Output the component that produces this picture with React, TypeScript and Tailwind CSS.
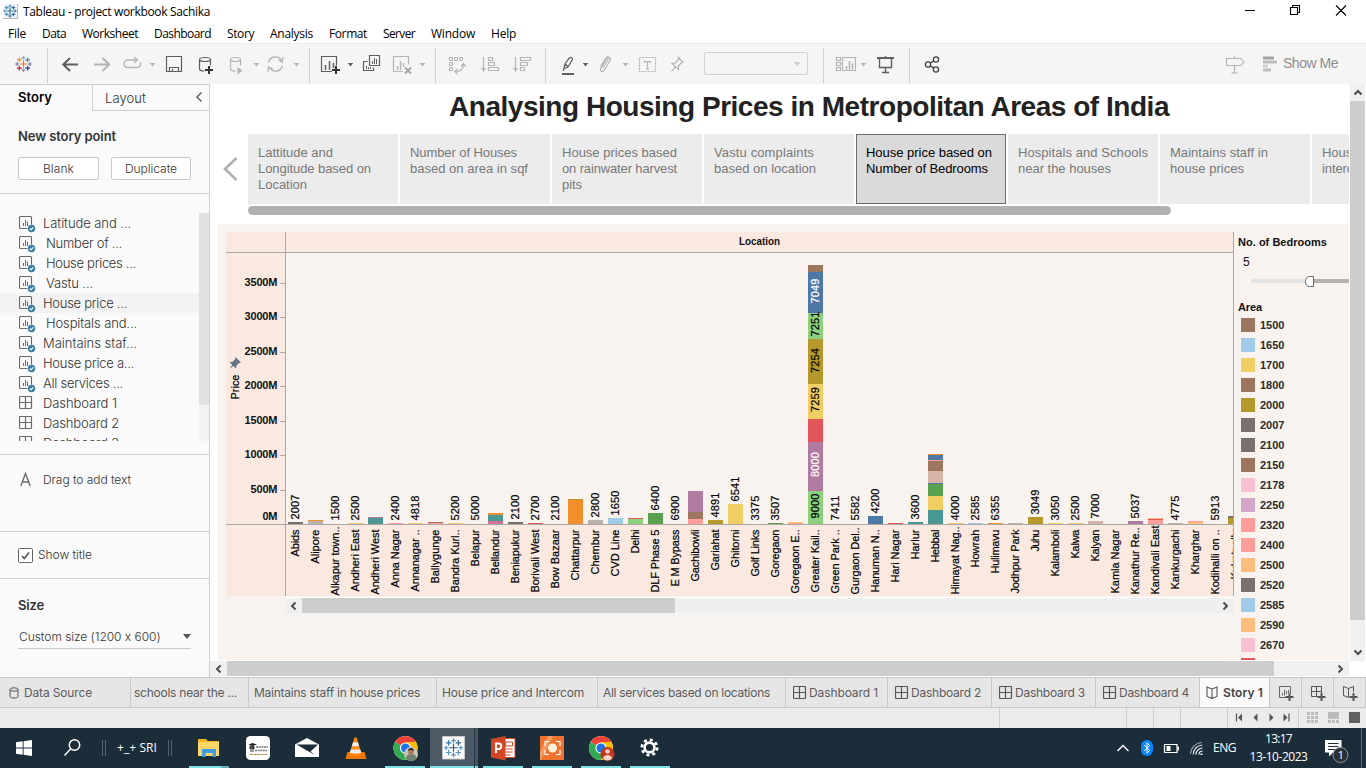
import { useLayoutEffect, useRef } from "react";
import type { ReactNode } from "react";

const UI = "font-['Inter','Open_Sans',sans-serif]";
const SEGOE = "font-['Open_Sans','Noto_Sans',sans-serif]";
const ARIAL = "font-['Liberation_Sans',Arial,sans-serif]";

/** A single line of text whose tracking is adjusted so that it spans `w` pixels. */
function Fit({ w, children, className = "" }: { w: number; children: string; className?: string }) {
  const ref = useRef<HTMLSpanElement>(null);
  useLayoutEffect(() => {
    const el = ref.current;
    if (!el) return;
    el.style.letterSpacing = "0px";
    const natural = el.getBoundingClientRect().width;
    el.style.letterSpacing = `${(w - natural) / children.length}px`;
  }, [w, children]);
  return (
    <span ref={ref} className={`inline-block shrink-0 whitespace-pre ${className}`}>
      {children}
    </span>
  );
}

/** A slice of an icon bar, drawn in window coordinates. */
function Cell({ x, w, y = 43, h = 41, children }: { x: number; w: number; y?: number; h?: number; children?: ReactNode }) {
  return (
    <svg className="block shrink-0" width={w} height={h} viewBox={`${x} ${y} ${w} ${h}`} fill="none">
      {children}
    </svg>
  );
}

const crosses: [number, number, number][] = [
  [0, 0, 3.6], [0, -6.2, 2], [0, 6.2, 2], [-6.4, 0, 2], [6.4, 0, 2],
  [-4.2, -4.2, 2.4], [4.2, -4.2, 2.4], [-4.2, 4.2, 2.4], [4.2, 4.2, 2.4],
];
const brandColors = ["#e8762c", "#7fb2bd", "#8b96b8", "#6c7fae", "#7a83a8", "#eb912c", "#5b879b", "#c72035", "#1f447e"];

function TableauMark({ cx, cy, s = 1, colors, sw = 1.2 }: { cx: number; cy: number; s?: number; colors: string[]; sw?: number }) {
  return (
    <g transform={`translate(${cx} ${cy}) scale(${s})`} strokeWidth={sw}>
      {crosses.map(([x, y, r], i) => (
        <path key={i} d={`M${x - r} ${y}h${2 * r}M${x} ${y - r}v${2 * r}`} stroke={colors[i % colors.length]} />
      ))}
    </g>
  );
}

const G = "#5f5f5f";
const L = "#b4b4b4";

function Caret({ x, c = L }: { x: number; c?: string }) {
  return <path d={`M${x - 2.8} 62h5.6l-2.8 3.6z`} fill={c} />;
}
function Sep({ x }: { x: number }) {
  return <path d={`M${x + 0.5} 47v35`} stroke="#d0d0d0" />;
}

function Toolbar() {
  return (
    <div className="flex h-[41px] border-t border-[#ececec] bg-[#f5f5f5]">
      <Cell x={0} w={50}>
        <TableauMark cx={23.5} cy={63} colors={brandColors} />
        <Sep x={47} />
      </Cell>
      <Cell x={50} w={36}><path d="M78 63.500H63.5M70 57L63.3 63.500l6.700 6.500" stroke={G} strokeWidth="2" /></Cell>
      <Cell x={86} w={32}><path d="M94 63.500h14.500M102.500 57l6.700 6.500-6.700 6.500" stroke={L} strokeWidth="2" /></Cell>
      <Cell x={118} w={44}>
        <path d="M137 59h-9.500a4 3.800 0 0 0 0 7.500h9a4 3.800 0 0 0 3.800-5.500M134 56l3.500 3-3.500 3" stroke={L} strokeWidth="1.300" />
        <Caret x={152.500} />
      </Cell>
      <Cell x={162} w={30}>
        <path d="M166.500 55.500h15v15h-15zM169.500 70.500v-4h9v4M172.500 68v2.500" stroke={G} strokeWidth="1.200" />
      </Cell>
      <Cell x={192} w={30}>
        <path d="M199.500 58.500v9.500c0 1.300 2 2 5 2M210.500 58.500v6" stroke={G} strokeWidth="1.200" />
        <ellipse cx="205" cy="58.500" rx="5.500" ry="2" stroke={G} strokeWidth="1.200" />
        <path d="M209 65v8M205 69h8" stroke="#333" strokeWidth="2" />
      </Cell>
      <Cell x={222} w={40}>
        <path d="M230.500 58.500v9.500c0 1.300 2 2 5 2M240.500 58.500v6" stroke={L} strokeWidth="1.200" />
        <ellipse cx="235.500" cy="58.500" rx="5" ry="2" stroke={L} strokeWidth="1.200" />
        <path d="M237.500 66v7.500l5-3.700z" fill={L} />
        <Caret x={256.500} />
      </Cell>
      <Cell x={262} w={54}>
        <path d="M268.500 61.500a7 7 0 0 1 13.200-1.500M282.500 64.500a7 7 0 0 1-13.200 1.500M283 56l-.800 5-4-2.200M268 71l.600-5 4.200 2" stroke={L} strokeWidth="1.300" />
        <Caret x={296.500} />
        <Sep x={309} />
      </Cell>
      <Cell x={316} w={42}>
        <path d="M332 70.500h-10.500v-15h15v9" stroke={G} strokeWidth="1.200" />
        <path d="M325.500 64v5M329.500 60v9M333.500 62v5" stroke={G} strokeWidth="1.500" />
        <path d="M336 65v8M332 69h8" stroke="#333" strokeWidth="2" />
        <Caret x={350.500} c={G} />
      </Cell>
      <Cell x={358} w={30}>
        <path d="M369.500 54.500h10v10h-10zM367.500 60.500h-4v9h10v-3" stroke={G} strokeWidth="1.200" />
        <path d="M372.500 60v3M374.500 57v6M376.500 58v5M366.500 65v3M368.500 66v2M370.500 66v2" stroke={G} />
      </Cell>
      <Cell x={388} w={54}>
        <path d="M403 70.500h-9.500v-15h15v8" stroke={L} strokeWidth="1.200" />
        <path d="M397.500 65v4M400.500 60v9M403.500 62v4" stroke={L} strokeWidth="1.400" />
        <path d="M405 66.500l6 6M411 66.500l-6 6" stroke="#a8a8a8" strokeWidth="2" />
        <Caret x={422.500} />
        <Sep x={435} />
      </Cell>
      <Cell x={442} w={32}>
        <path d="M449.500 56.500h3v3h-3zM454.500 56.500h3v3h-3zM459.500 56.500h3v3h-3zM449.500 61.500h3v3h-3zM449.500 66.500h3v3h-3z" stroke={L} />
        <path d="M463.500 63c0 5-3 7.500-8.500 8M461 65.500l2.500-3 2.500 3M457.500 68l-2.700 2.500 2.700 2.500" stroke={L} strokeWidth="1.200" />
      </Cell>
      <Cell x={474} w={32}>
        <path d="M483.500 56v14M481.500 67l2 3 2-3M488.500 56.500h4v3h-4zM488.500 61.500h6v3h-6zM488.500 66.500h10v3h-10z" stroke={L} strokeWidth="1.200" />
      </Cell>
      <Cell x={506} w={46}>
        <path d="M515.500 56v14M513.500 67l2 3 2-3M520.500 56.500h10v3h-10zM520.500 61.500h7v3h-7zM520.500 66.500h4v3h-4z" stroke={L} strokeWidth="1.200" />
        <Sep x={545} />
      </Cell>
      <Cell x={552} w={42}>
        <path d="M564 67.500l1-4.500 4.500-6.200c1.500-.8 2.700 0 3 1.500L568 66zM565 63l3 2.500M564.500 67l-1.500 3" stroke={G} strokeWidth="1.200" />
        <path d="M562 73h12" stroke={G} strokeWidth="2" />
        <Caret x={585.500} c={G} />
      </Cell>
      <Cell x={594} w={40}>
        <path d="M603 67l5-8.500c1-1.500-.5-2.500-1.500-1l-5.500 9.500c-1.500 3 1.500 5 3.500 2l5.500-9.500c1.500-3-2-5-4-2.500l-5.500 8.500" stroke={L} strokeWidth="1.200" />
        <Caret x={625.500} />
      </Cell>
      <Cell x={634} w={30}>
        <path d="M639.500 56.500h16v14h-16z" stroke={L} strokeDasharray="2 1" strokeWidth="1.200" />
        <path d="M644.500 62v-1.500h6v1.500M647.500 60.500v7.500M646 68h3" stroke={L} strokeWidth="1.200" />
      </Cell>
      <Cell x={664} w={40}>
        <path d="M678.500 56.500l4.500 4.500-1.500.5-3 3.500v3.500l-6.500-6 3.500-.500 3-3.500zM675.500 65.500l-4 5" stroke={L} strokeWidth="1.200" />
      </Cell>
      <div className="mt-[8px] flex h-[23px] w-[104px] items-center justify-end rounded-[2px] border border-[#d2d2d2]">
        <svg width="16" height="8" viewBox="0 0 16 8"><path d="M3 2h6.500L6.250 6z" fill="#ccc" /></svg>
      </div>
      <Cell x={808} w={64}>
        <Sep x={823} />
        <path d="M836.500 56.500h4v3h-4zM836.500 61.500h4v3h-4zM836.500 66.500h4v3h-4zM842.500 56.500h13v13h-13z" stroke={L} strokeWidth="1.200" />
        <path d="M846.500 65v3.500M849.500 60v8.500M852.500 62.500v6" stroke={L} strokeWidth="1.600" />
        <Caret x={863.500} />
      </Cell>
      <Cell x={872} w={42}>
        <path d="M877 57h17" stroke={G} strokeWidth="2" />
        <path d="M879.500 58v8.500h12V58M885.500 66.500v5M882 71.500h7M885.500 55v2" stroke={G} strokeWidth="1.400" />
        <Sep x={909} />
      </Cell>
      <Cell x={914} w={306}>
        <g stroke="#444" strokeWidth="1.300">
          <circle cx="928" cy="63.500" r="2.600" /><circle cx="936" cy="58.500" r="2.600" /><circle cx="936" cy="68.500" r="2.600" />
          <path d="M930.200 62.100l3.600-2.200M930.200 64.900l3.600 2.200" />
        </g>
      </Cell>
      <Cell x={1220} w={63}>
        <path d="M1226.500 57.500h14.500l2.700 3.500-2.700 3.500h-14.500zM1234.500 55v2.500M1234.500 64.500v7.500M1231.500 72h6" stroke={L} strokeWidth="1.200" />
        <path d="M1263 57h11" stroke="#a5a5a5" strokeWidth="3" />
        <path d="M1263 61h14" stroke="#bdbdbd" strokeWidth="3" />
        <path d="M1263 65h5" stroke="#d0d0d0" strokeWidth="3" />
        <path d="M1263 69h8" stroke="#c0c0c0" strokeWidth="3" />
      </Cell>
      <Fit w={55} className={`${ARIAL} text-[14px] leading-[39px] text-[#8e8e8e]`}>Show Me</Fit>
    </div>
  );
}

const menus: [string, number][] = [
  ["File", 18], ["Data", 24], ["Worksheet", 56], ["Dashboard", 57], ["Story", 27],
  ["Analysis", 43], ["Format", 38], ["Server", 32], ["Window", 44], ["Help", 25],
];

const sheets: [string, number, boolean, boolean][] = [
  ["Latitude and ...", 88, false, true], ["Number of ...", 76, true, true], ["House prices ...", 90, true, true],
  ["Vastu ...", 47, true, true], ["House price ...", 84, false, true], ["Hospitals and...", 91, true, true],
  ["Maintains staf...", 94, false, true], ["House price a...", 91, false, true], ["All services ...", 80, false, true],
  ["Dashboard 1", 74, false, false], ["Dashboard 2", 76, false, false], ["Dashboard 3", 76, false, false],
];

function SheetIcon() {
  return (
    <svg width="17" height="18" viewBox="0 0 17 18" fill="none" className="block">
      <path d="M8.500 12.500h-7a1 1 0 0 1-1-1v-10a1 1 0 0 1 1-1h10a1 1 0 0 1 1 1v7" stroke="#6a6a6a" strokeWidth="1.100" />
      <path d="M4.500 7v3M6.500 4v6M8.500 5.500v4.500" stroke="#6a6a6a" />
      <circle cx="12.500" cy="12.500" r="3.700" fill="#3a7fa3" />
      <path d="M10.800 12.500l1.300 1.300 2.200-2.500" stroke="#fff" strokeWidth="1.100" />
    </svg>
  );
}
function DashIcon({ c = "#6a6a6a", w = 17 }: { c?: string; w?: number }) {
  return (
    <svg width={w} height="14" viewBox={`0 0 ${w} 14`} fill="none" className="block shrink-0">
      <path d="M1.500.5h10a1 1 0 0 1 1 1v10a1 1 0 0 1-1 1h-10a1 1 0 0 1-1-1v-10a1 1 0 0 1 1-1zM6.500.5v12M.5 6.500h12" stroke={c} strokeWidth="1.200" />
    </svg>
  );
}

function Sidebar() {
  return (
    <div className={`h-[593px] w-[210px] shrink-0 border-r border-t border-[#cfcfcf] bg-[#fafafa] text-[#333] ${UI}`}>
      <div className="flex h-[26px]">
        <div className="flex w-[92px] pl-[18px] text-black"><Fit w={34} className="text-[13px] font-semibold leading-[25px]">Story</Fit></div>
        <div className="flex flex-1 items-center justify-between border-b border-l border-[#cfcfcf] pl-[12px] pr-[6px]">
          <Fit w={41} className="text-[13px] font-light leading-[24px]">Layout</Fit>
          <svg width="8" height="10" viewBox="0 0 8 10" fill="none" className="mb-[2px]"><path d="M6.500 0.500L2 5l4.500 4.500" stroke="#555" strokeWidth="1.300" /></svg>
        </div>
      </div>
      <div className="h-[83px] border-b border-[#cfcfcf] pl-[18px] pt-[16px]">
        <div className="flex h-[18px]"><Fit w={98} className="text-[13px] font-semibold leading-[18px]">New story point</Fit></div>
        <div className="mt-[12px] flex gap-[12px]">
          <div className="flex h-[23px] w-[81px] items-center justify-center rounded-[2px] border border-[#c9c9c9] bg-white"><Fit w={31} className="text-[12px] font-light leading-[20px]">Blank</Fit></div>
          <div className="flex h-[23px] w-[80px] items-center justify-center rounded-[2px] border border-[#c9c9c9] bg-white"><Fit w={52} className="text-[12px] font-light leading-[20px]">Duplicate</Fit></div>
        </div>
      </div>
      <div className="flex h-[261px] border-b border-[#cfcfcf] pb-[13px] pt-[19px]">
        <div className="flex-1 overflow-hidden">
          {sheets.map(([name, w, indent, sheet], i) => (
            <div key={name} className={`flex h-[20px] pl-[19px] ${i === 4 ? "bg-[#f3f3f3]" : ""}`}>
              <div className={`shrink-0 pt-[3px] ${indent ? "w-[27px]" : "w-[24px]"}`}>{sheet ? <SheetIcon /> : <DashIcon />}</div>
              <Fit w={w} className="text-[13px] font-light leading-[20px]">{name}</Fit>
            </div>
          ))}
        </div>
        <div className="w-[10px] bg-[#f3f3f3]"><div className="h-[192px] bg-[#e1e1e1]" /></div>
      </div>
      <div className="flex h-[77px] border-b border-[#cfcfcf] pl-[20px] pt-[15px]">
        <svg width="23" height="20" viewBox="0 0 23 20" fill="none"><path d="M.8 16L5.500 3.500l4.700 12.500M2.400 12h6.200" stroke="#6a6a6a" strokeWidth="1.400" /></svg>
        <Fit w={88} className="text-[12px] font-light leading-[20px]">Drag to add text</Fit>
      </div>
      <div className="flex h-[47px] items-center border-b border-[#cfcfcf] pl-[18px]">
        <svg width="15" height="15" viewBox="0 0 15 15" fill="none"><rect x=".5" y=".5" width="14" height="14" rx="1" fill="#fff" stroke="#666" /><path d="M4 8l2.300 2.500 4.700-6" stroke="#555" strokeWidth="1.700" /></svg>
        <Fit w={54} className="ml-[5px] text-[12px] font-light leading-[20px]">Show title</Fit>
      </div>
      <div className="pl-[18px] pt-[16px]">
        <div className="flex h-[20px]"><Fit w={26} className="text-[13px] font-semibold leading-[20px]">Size</Fit></div>
        <div className="mt-[10px] flex h-[24px] w-[173px] items-center justify-between border-b border-[#c9c9c9]">
          <Fit w={143} className="ml-[1px] text-[12px] font-light leading-[22px]">Custom size (1200 x 600)</Fit>
          <svg width="8" height="5" viewBox="0 0 8 5"><path d="M0 0h8L4 5z" fill="#555" /></svg>
        </div>
      </div>
    </div>
  );
}

const points: [string, number][][] = [
  [["Lattitude and", 75], ["Longitude based on", 113], ["Location", 49]],
  [["Number of Houses", 107], ["based on area in sqf", 118]],
  [["House prices based", 115], ["on rainwater harvest", 115], ["pits", 20]],
  [["Vastu complaints", 100], ["based on location", 102]],
  [["House price based on", 126], ["Number of Bedrooms", 122]],
  [["Hospitals and Schools", 130], ["near the houses", 93]],
  [["Maintains staff in", 98], ["house prices", 74]],
  [["House price and", 94], ["intercom", 49]],
];

const C = {
  blue: "#4e79a7", sky: "#a0cbe8", orange: "#f28e2b", peach: "#ffbe7d", green: "#59a14f", lime: "#8cd17d",
  olive: "#b6992d", yellow: "#f1ce63", teal: "#499894", red: "#e15759", pink: "#ff9d9a", gray: "#79706e",
  silver: "#bab0ac", rose: "#d37295", mauve: "#b07aa1", brown: "#9d7660", tan: "#d7b5a6",
};
type Bar = { n: string; len: number; top?: number; v?: string; s?: [number, string][] };
/* each segment is [top y, colour]; it runs down to the next segment or to the axis at 524 */
const bars: Bar[] = [
  { n: "Abids", len: 27, v: "2007", s: [[522, C.gray]] },
  { n: "Alipore", len: 34, s: [[520, C.orange], [521, C.silver]] },
  { n: "Alkapur town..", len: 69, top: 526, v: "1500" },
  { n: "Andheri East", len: 62, v: "2500", s: [[523, C.peach]] },
  { n: "Andheri West", len: 65, s: [[517, C.mauve], [518, C.teal]] },
  { n: "Anna Nagar", len: 58, v: "2400", s: [[523, C.pink]] },
  { n: "Annanagar ..", len: 62, v: "4818", s: [[523, C.peach]] },
  { n: "Ballygunge", len: 54, s: [[522, C.brown], [523, C.pink]] },
  { n: "Bandra Kurl..", len: 63, v: "5200", s: [[523, C.peach]] },
  { n: "Belapur", len: 37, v: "5000" },
  { n: "Bellandur", len: 45, s: [[513, C.orange], [515, C.teal], [521, C.rose]] },
  { n: "Beniapukur", len: 54, v: "2100", s: [[522, C.gray]] },
  { n: "Borivali West", len: 63, v: "2700", s: [[523, C.red]] },
  { n: "Bow Bazaar", len: 59, v: "2100" },
  { n: "Chattarpur", len: 51, s: [[499, C.olive], [500, C.orange]] },
  { n: "Chembur", len: 45, v: "2800", s: [[520, C.silver]] },
  { n: "CVD Line", len: 47, v: "1650", s: [[518, C.sky]] },
  { n: "Delhi", len: 24, s: [[518, C.red], [519, C.lime]] },
  { n: "DLF Phase 5", len: 63, v: "6400", s: [[513, C.green]] },
  { n: "E M Bypass", len: 57, v: "6900" },
  { n: "Gachibowli", len: 52, s: [[491, C.mauve], [512, C.brown], [519, C.pink]] },
  { n: "Gariahat", len: 41, v: "4891", s: [[520, C.olive]] },
  { n: "Ghitorni", len: 38, v: "6541", s: [[504, C.yellow]] },
  { n: "Golf Links", len: 47, v: "3375" },
  { n: "Goregaon", len: 48, v: "3507", s: [[523, C.green]] },
  { n: "Goregaon E..", len: 64, s: [[522, C.yellow], [523, C.pink]] },
  { n: "Greater Kail..", len: 63, s: [[265, C.brown], [272, C.blue], [313, C.lime], [339, C.olive], [384, C.yellow], [419, C.red], [442, C.mauve], [491, C.lime]] },
  { n: "Green Park ..", len: 64, v: "7411" },
  { n: "Gurgaon Del..", len: 67, top: 527, v: "5582" },
  { n: "Hanuman N..", len: 63, v: "4200", s: [[516, C.blue]] },
  { n: "Hari Nagar", len: 53, s: [[523, C.red]] },
  { n: "Harlur", len: 30, v: "3600", s: [[522, C.teal]] },
  { n: "Hebbal", len: 33, s: [[454, C.orange], [455, C.blue], [460, C.pink], [461, C.brown], [471, C.tan], [483, C.blue], [484, C.green], [496, C.yellow], [510, C.teal]] },
  { n: "Himayat Nag..", len: 68, top: 526, v: "4000", s: [[523, C.peach]] },
  { n: "Howrah", len: 38, v: "2585", s: [[523, C.sky]] },
  { n: "Hulimavu", len: 44, v: "6355", s: [[523, C.orange]] },
  { n: "Jodhpur Park", len: 64, s: [[523, C.silver]] },
  { n: "Juhu", len: 22, v: "3049", s: [[517, C.olive]] },
  { n: "Kalamboli", len: 47, v: "3050", s: [[523, C.yellow]] },
  { n: "Kalwa", len: 29, v: "2500", s: [[523, C.peach]] },
  { n: "Kalyan", len: 32, v: "7000", s: [[521, C.tan]] },
  { n: "Kamla Nagar", len: 64 },
  { n: "Kanathur Re..", len: 67, top: 527, v: "5037", s: [[521, C.mauve]] },
  { n: "Kandivali East", len: 69, top: 525, s: [[518, C.peach], [519, C.red], [520, C.pink]] },
  { n: "Kankurgachi", len: 60, v: "4775", s: [[523, C.silver]] },
  { n: "Kharghar", len: 45, s: [[521, C.pink], [522, C.peach]] },
  { n: "Kodihalli on ..", len: 65, v: "5913" },
  { n: "Kukatpally", len: 50, s: [[516, C.gray], [518, C.olive]] },
];
const inner: [string, number, string][] = [
  ["7049", 303.5, "#fff"], ["7251", 336.5, "#000"], ["7254", 373, "#000"], ["7259", 412, "#000"], ["8000", 477, "#fff"], ["9000", 518.5, "#000"],
];

function VText({ x, y, len, fill = "#000", children }: { x: number; y: number; len: number; fill?: string; children: string }) {
  return (
    <text transform={`translate(${x} ${y}) rotate(-90)`} textLength={len} fontSize="11" fill={fill} stroke={fill} strokeWidth=".2">
      {children}
    </text>
  );
}

function Chart() {
  return (
    <svg className={`block ${ARIAL}`} width="1008" height="364" viewBox="226 232 1008 364">
      <path d="M226 232h1007v20H226zM226 253h59v343h-59zM285 525h948v71H285z" fill="#fae9e0" />
      <clipPath id="plot"><rect x="286" y="232" width="947" height="364" /></clipPath>
      <path d="M226 252.500h1007M226 524.500h1007M285.500 232v364M1233.500 232v364" stroke="#a9a9a9" fill="none" />
      <text x="739" y="245" fontSize="11" fontWeight="700" textLength="41" lengthAdjust="spacingAndGlyphs" fill="#111">Location</text>
      {[0, 500, 1000, 1500, 2000, 2500, 3000, 3500].map((v, i) => {
        const y = Math.round(524 - i * 34.5);
        const len = v === 0 ? 15 : v < 1000 ? 27 : 33;
        return (
          <g key={v}>
            {v > 0 && <path d={`M280 ${y + 0.5}h5`} stroke="#a9a9a9" />}
            <text x={277.5 - len} y={v === 0 ? 520 : y + 3} fontSize="11" fontWeight="700" textLength={len} fill="#111">{`${v}M`}</text>
          </g>
        );
      })}
      <VText x={239} y={399.500} len={25}>Price</VText>
      <path d="M235.500 357l5.500 5.500-2 .500-2.500 2.500-.5 3-2.700-2.600-4 3 3-4-2.800-2.600 3-.500 2.500-2.500z" fill="#667585" />
      <g clipPath="url(#plot)">
        {bars.map((b, i) => {
          const x = 288 + i * 20;
          const segs = b.s ?? [];
          const top = segs.length ? segs[0][0] : 524;
          const bottom = top - 2.500 > 520.500 ? 520.500 : top - 2.500;
          return (
            <g key={i}>
              {segs.map(([y, c], k) => (
                <rect key={k} x={x} y={y} width="15" height={(segs[k + 1]?.[0] ?? 524) - y} fill={c} />
              ))}
              {b.v && <VText x={x + 11} y={bottom} len={25}>{b.v}</VText>}
              <VText x={x + 11} y={(b.top ?? 529) + b.len + 0.5} len={b.len}>{b.n}</VText>
            </g>
          );
        })}
        {inner.map(([t, y, c]) => <VText key={t} x={819} y={y} len={25} fill={c}>{t}</VText>)}
      </g>
    </svg>
  );
}

const legend: [string, string][] = [
  ["1500", "bg-[#9d7660]"], ["1650", "bg-[#a0cbe8]"], ["1700", "bg-[#f1ce63]"], ["1800", "bg-[#9d7660]"],
  ["2000", "bg-[#b6992d]"], ["2007", "bg-[#79706e]"], ["2100", "bg-[#79706e]"], ["2150", "bg-[#9d7660]"],
  ["2178", "bg-[#fabfd2]"], ["2250", "bg-[#d4a6c8]"], ["2320", "bg-[#ff9d9a]"], ["2400", "bg-[#ff9d9a]"],
  ["2500", "bg-[#ffbe7d]"], ["2520", "bg-[#79706e]"], ["2585", "bg-[#a0cbe8]"], ["2590", "bg-[#ffbe7d]"],
  ["2670", "bg-[#fabfd2]"],
];

function Arrow({ d }: { d: string }) {
  return <svg width="10" height="10" viewBox="0 0 10 10" fill="none" className="block"><path d={d} stroke="#4d4d4d" strokeWidth="2" /></svg>;
}
const LEFT = "M6.500 1.500L3 5l3.500 3.500";
const RIGHT = "M3.500 1.500L7 5 3.500 8.500";

function Main() {
  return (
    <div className="flex h-[593px] w-[1156px] flex-col bg-white">
      <div className="flex h-[577px]">
        <div className={`w-[1140px] overflow-hidden pr-[1px] ${ARIAL}`}>
          <div className="h-[50px] pl-[239px] pt-[5px]">
            <Fit w={720} className="text-[28px] font-bold leading-[36px] text-[#222]">Analysing Housing Prices in Metropolitan Areas of India</Fit>
          </div>
          <div className="flex h-[70px]">
            <div className="flex w-[38px] shrink-0 items-center pl-[13px]">
              <svg width="15" height="24" viewBox="0 0 15 24" fill="none"><path d="M13.500 1L2 12l11.500 11" stroke="#b0b0b0" strokeWidth="2.600" /></svg>
            </div>
            <div className="flex gap-[2px] overflow-hidden">
              {points.map((lines, i) => (
                <div key={i} className={`h-[70px] w-[150px] shrink-0 text-[13px] leading-[16px] ${i === 4 ? "border border-[#6b6b6b] bg-[#dadada] pl-[9px] pt-[10px] text-black" : "bg-[#ececec] pl-[10px] pt-[11px] text-[#787878]"}`}>
                  {lines.map(([t, w]) => <div key={t} className="h-[16px]"><Fit w={w}>{t}</Fit></div>)}
                </div>
              ))}
            </div>
          </div>
          <div className="ml-[38px] mt-[2px] h-[9px] w-[923px] rounded-full bg-[#b0b0b0]" />
          <div className="ml-[8px] mt-[9px] flex h-[436px] bg-[#f8f3ef] pl-[8px] pt-[8px]">
            <div className="w-[1008px] shrink-0">
              <Chart />
              <div className="ml-[59px] mt-px h-px bg-white" />
              <div className="ml-[59px] flex h-[15px] items-center bg-[#efefef] pl-[4px] pr-[4px]">
                <Arrow d={LEFT} />
                <div className="ml-[3px] h-[15px] w-[373px] bg-[#cdcdcd]" />
                <div className="ml-auto"><Arrow d={RIGHT} /></div>
              </div>
            </div>
            <div className="flex-1 overflow-hidden text-[11px] text-[#111]">
              <div className="h-[20px] pl-[4px] leading-[20px]"><Fit w={89} className="font-bold">No. of Bedrooms</Fit></div>
              <div className="h-[20px] pl-[9px] text-[12px] leading-[20px]">5</div>
              <div className="flex h-[18px] items-center pl-[17px]">
                <div className="h-[4px] w-[54px] bg-[#e4e4e4]" />
                <svg width="9" height="11" viewBox="0 0 9 11"><path d="M8.500.5v10H4.500C2 10.500.5 8.500.5 5.500S2 .5 4.500.5z" fill="#fff" stroke="#666" /></svg>
                <div className="h-[4px] flex-1 bg-[#b3b3b3]" />
              </div>
              <div className="mt-[7px] h-[18px] pl-[4px] leading-[20px]"><Fit w={24} className="font-bold">Area</Fit></div>
              {legend.map(([t, c]) => (
                <div key={t} className="flex h-[20px] items-center pl-[7px]">
                  <div className={`h-[14px] w-[14px] ${c}`} />
                  <span className="ml-[5px] font-bold leading-[20px] text-[#2b2b2b]">{t}</span>
                </div>
              ))}
              <div className="ml-[7px] mt-[3px] h-[14px] w-[14px] bg-[#e15759]" />
            </div>
          </div>
        </div>
        <div className="flex w-[15px] flex-col items-center bg-[#f0f0f0]">
          <div className="flex h-[17px] items-center"><Arrow d="M1.500 6.500L5 3l3.500 3.500" /></div>
          <div className="h-[519px] w-[15px] bg-[#cdcdcd]" />
          <div className="mt-[23px] flex h-[17px] items-center"><Arrow d="M1.500 3.500L5 7l3.500-3.500" /></div>
        </div>
      </div>
      <div className="flex h-[15px] w-[1139px] items-center bg-[#f0f0f0] pl-[4px] pr-[4px]">
        <Arrow d={LEFT} />
        <div className="ml-[3px] h-[15px] w-[1047px] bg-[#cdcdcd]" />
        <div className="ml-auto"><Arrow d={RIGHT} /></div>
      </div>
    </div>
  );
}

const sheetTabs: { t: string; w: string; tw: number; pl: string; icon?: boolean }[] = [
  { t: "schools near the ...", w: "w-[118px]", tw: 103, pl: "pl-[3px]" },
  { t: "Maintains staff in house prices", w: "w-[188px]", tw: 166, pl: "pl-[5px]" },
  { t: "House price and Intercom", w: "w-[161px]", tw: 142, pl: "pl-[5px]" },
  { t: "All services based on locations", w: "w-[188px]", tw: 167, pl: "pl-[5px]" },
  { t: "Dashboard 1", w: "w-[102px]", tw: 69, pl: "pl-[7px]", icon: true },
  { t: "Dashboard 2", w: "w-[104px]", tw: 70, pl: "pl-[7px]", icon: true },
  { t: "Dashboard 3", w: "w-[104px]", tw: 70, pl: "pl-[7px]", icon: true },
  { t: "Dashboard 4", w: "w-[104px]", tw: 70, pl: "pl-[7px]", icon: true },
];

function Tabs() {
  return (
    <div className={`flex h-[31px] border-b border-t border-[#c8c8c8] bg-[#e6e6e6] text-[12px] text-[#5c5c5c] ${UI}`}>
      <div className="flex w-[130px] shrink-0 items-center pl-[9px]">
        <svg width="10" height="12" viewBox="0 0 10 12" fill="none"><path d="M1 2.500v7c0 2 8 2 8 0v-7" stroke="#555" /><ellipse cx="5" cy="2.500" rx="4" ry="1.700" stroke="#555" /></svg>
        <Fit w={68} className="ml-[5px]">Data Source</Fit>
      </div>
      {sheetTabs.map((s) => (
        <div key={s.t} className={`flex shrink-0 items-center border-l border-[#c8c8c8] ${s.w} ${s.pl}`}>
          {s.icon && <DashIcon c="#555" w={16} />}
          <Fit w={s.tw}>{s.t}</Fit>
        </div>
      ))}
      <div className="flex w-[70px] shrink-0 items-center border-l border-[#c8c8c8] bg-[#fafafa] pl-[6px]">
        <svg width="12" height="13" viewBox="0 0 12 13" fill="none"><path d="M6 3L1 1v9.500l5 2 5-2V1L6 3v9.500" stroke="#555" strokeWidth="1.100" /></svg>
        <Fit w={40} className="ml-[5px] font-semibold text-[#444]">Story 1</Fit>
      </div>
      <div className="flex w-[32px] shrink-0 items-center justify-center border-l border-[#c8c8c8]">
        <svg width="16" height="16" viewBox="0 0 16 16" fill="none"><path d="M8 12.500H1.500v-11h11V8M4.500 8v2.500M6.500 5v5.500M8.500 6v3M10.500 5v3" stroke="#666" /><path d="M11.500 8v8M7.500 12h8" stroke="#555" strokeWidth="2" /></svg>
      </div>
      <div className="flex w-[32px] shrink-0 items-center justify-center border-l border-[#c8c8c8]">
        <svg width="16" height="16" viewBox="0 0 16 16" fill="none"><path d="M8 11.500H1.500v-10h10V8M6.500 1.500v10M1.500 6.500h10" stroke="#555" /><path d="M11.500 8v8M7.500 12h8" stroke="#555" strokeWidth="2" /></svg>
      </div>
      <div className="flex w-[32px] shrink-0 items-center justify-center border-l border-[#c8c8c8]">
        <svg width="16" height="16" viewBox="0 0 16 16" fill="none"><path d="M6.500 3.500l-5-2v9l5 2v-9l5-2V7" stroke="#555" /><path d="M11.500 8v8M7.500 12h8" stroke="#555" strokeWidth="2" /></svg>
      </div>
      <div className="border-l border-[#c8c8c8]" />
    </div>
  );
}

function Status() {
  return (
    <div className="flex h-[20px] bg-[#ebebeb]">
      <Cell x={0} w={1366} y={708} h={20}>
        <path d="M999.500 708v20M1126.500 708v20M1153.500 708v20M1180.500 708v20M1227.500 708v20M1298.500 708v20" stroke="#cdcdcd" />
        <path d="M1242 713.500v8l-4-4zM1257.500 713.500v8l-4-4zM1269.500 713.500v8l4-4zM1283.500 713.500v8l4-4z" fill="#555" />
        <path d="M1236.500 713.500v8M1289 713.500v8" stroke="#555" strokeWidth="1.200" />
        <path d="M1307 712h3v3h-3zM1311 712h3v3h-3zM1315 712h3v3h-3zM1307 716h3v3h-3zM1311 716h3v3h-3zM1315 716h3v3h-3zM1307 720h3v3h-3zM1311 720h3v3h-3zM1315 720h3v3h-3zM1328 712h11v7h-11zM1328 720h3v3h-3zM1332 720h3v3h-3zM1336 720h3v3h-3z" fill="#bcbcbc" />
        <path d="M1349 712h11v11h-11z" fill="#606060" />
      </Cell>
    </div>
  );
}

function Chrome({ cx }: { cx: number }) {
  return (
    <g>
      <circle cx={cx} cy="748" r="12" fill="#fff" />
      <path d={`M${cx} 748L${cx - 10.4} 742a12 12 0 0 1 20.8 0z`} fill="#ea4335" />
      <path d={`M${cx - 10.4} 742a12 12 0 0 0 10.4 18l5.200-9-5.200-3z`} fill="#34a853" />
      <path d={`M${cx + 10.4} 742a12 12 0 0 1-10.400 18l5.200-9-5.200-3V742z`} fill="#fbbc04" />
      <circle cx={cx} cy="748" r="5.600" fill="#fff" />
      <circle cx={cx} cy="748" r="4.500" fill="#1a73e8" />
    </g>
  );
}
function Run({ x, w = 40 }: { x: number; w?: number }) {
  return <path d={`M${x} 766h${w}v2h-${w}z`} fill="#7fe0e6" />;
}

function Taskbar() {
  const t = { y: 728, h: 40 };
  return (
    <div className={`flex h-[40px] bg-[#1c2d3a] text-white ${SEGOE}`}>
      <Cell x={0} w={48} {...t}>
        <path d="M16 742.200l6.700-.9v6.200H16zM23.600 741.200l8.400-1.200v7.500h-8.400zM16 748.400h6.700v6.300l-6.700-.9zM23.600 748.400h8.400v7.600l-8.400-1.200z" fill="#fff" />
      </Cell>
      <Cell x={48} w={69} {...t}>
        <circle cx="74.500" cy="745" r="5.200" stroke="#fff" strokeWidth="1.500" />
        <path d="M70.800 748.800l-6.300 6.700" stroke="#fff" strokeWidth="1.500" />
        <path d="M102.500 740v16M105.500 740v16" stroke="#53626d" />
      </Cell>
      <Fit w={40} className="text-[12px] leading-[39px]">+_+ SRI</Fit>
      <Cell x={157} w={75} {...t}>
        <path d="M168.500 740v16M171.500 740v16" stroke="#53626d" />
        <path d="M198 739h8l2 2h11v15h-21z" fill="#f0b429" />
        <path d="M198 742h21v14h-21z" fill="#ffd766" />
        <path d="M202 749h14v8h-3.500v-4h-7v4H202z" fill="#3e9be0" />
        <Run x={189} w={32} />
        <path d="M221 766h8v2h-8z" fill="#6fb0b6" />
      </Cell>
      <Cell x={232} w={50} {...t}>
        <rect x="246" y="736" width="24" height="24" rx="4.500" fill="#fff" />
        <path d="M248.500 744.500l4-1.500 4.500 1.500-4.500 1.500z" fill="#222" />
        <path d="M250 746h4v3h-4zM250 751h4" stroke="#333" fill="#555" />
        <path d="M256 747h12M255 750.500h12" stroke="#777" strokeWidth="1.600" strokeDasharray="2 .6" />
        <path d="M250 754.500h18" stroke="#b08850" strokeDasharray="3 .6" />
      </Cell>
      <Cell x={282} w={50} {...t}>
        <path d="M295 744.500l12-6.500 12 6.500V757h-24z" fill="#fff" />
        <path d="M296.500 744.500h21.500l-7.500 7 4.500 3.500-9-5z" fill="#1c2d3a" />
      </Cell>
      <Cell x={332} w={48} {...t}>
        <path d="M347.500 752h17l2 7H345.500z" fill="#f07800" />
        <path d="M354.500 737.500h2l5 16c0 2.500-12 2.500-12 0z" fill="#ff8a14" />
        <path d="M353 742.500h5l1.200 3.800h-7.400zM350.800 749.500h9.400l1 3c-2 1.300-9.400 1.300-11.400 0z" fill="#eee" />
      </Cell>
      <Cell x={380} w={50} {...t}>
        <Chrome cx={405.500} />
        <circle cx="411" cy="754" r="7" fill="#c9c3b5" />
        <path d="M406 759c0-4 2.500-5 5-5s5.500 1 5.500 4.500a7 7 0 0 1-10.500.5z" fill="#71817a" />
        <circle cx="411" cy="752" r="2.700" fill="#a97c60" />
        <path d="M408 751c0-4 6-4 6 0-2-1.500-4-1.500-6 0z" fill="#2d2521" />
        <Run x={385} />
      </Cell>
      <Cell x={430} w={50} {...t}>
        <path d="M430 728h44v40h-44z" fill="#4b5a65" />
        <path d="M474 728h1v40h-1z" fill="#25343f" />
        <path d="M475 728h3v40h-3z" fill="#46555f" />
        <path d="M442.500 736.500h22v22.500h-22z" fill="#fafafa" stroke="#c8c8c8" />
        <TableauMark cx={453.500} cy={747.700} s={1.150} sw={1} colors={["#315f8c", "#5592bd", "#5592bd", "#5592bd", "#5592bd", "#3678a8"]} />
        <Run x={430} w={44} />
        <path d="M475 766h3v2h-3z" fill="#7fe0e6" />
      </Cell>
      <Cell x={480} w={48} {...t}>
        <path d="M503 738.500h12v19h-12z" fill="#fff" stroke="#d24726" />
        <path d="M505.500 742h7v4h-7zM505.500 749h7M505.500 752h7M505.500 755h5" stroke="#d24726" />
        <path d="M491 739l14.500-3v24.500l-14.500-3z" fill="#d24726" />
        <path d="M496 753v-9.500h2.700c3.500 0 3.500 5.500 0 5.500H496" stroke="#fff" strokeWidth="1.900" />
        <Run x={483} />
      </Cell>
      <Cell x={528} w={50} {...t}>
        <path d="M540 736h24v24h-24z" fill="#ee7430" />
        <path d="M540 752l8-16h5l-12 24h-1z" fill="#f49a62" />
        <path d="M545 746v-4.500h4M556 741.500h4v4.500M560 750v4.500h-4M549 754.500h-4V750" stroke="#fff" strokeWidth="1.200" />
        <circle cx="552.500" cy="748" r="4.500" fill="#fdf3d8" />
        <Run x={532} />
      </Cell>
      <Cell x={578} w={48} {...t}>
        <Chrome cx={601} />
        <circle cx="607.500" cy="754" r="7" fill="#c5341c" />
        <circle cx="607.500" cy="751.500" r="2.300" fill="#f6d4c6" />
        <path d="M603 758.800c0-5 9-5 9 0a7 7 0 0 1-9 0z" fill="#f6d4c6" />
        <Run x={581} />
      </Cell>
      <Cell x={626} w={587} {...t}>
        <circle cx="649.500" cy="747.500" r="4.900" stroke="#fff" strokeWidth="2.600" />
        <circle cx="649.500" cy="747.500" r="7.600" stroke="#fff" strokeWidth="2.800" strokeDasharray="3 2.970" />
        <Run x={630} />
        <path d="M1117.500 751l5.500-5.500 5.500 5.500" stroke="#fff" strokeWidth="1.400" />
        <rect x="1141" y="740" width="12" height="16" rx="6" fill="#0a84ff" />
        <path d="M1144.300 745l5.200 5.500-2.500 2.700v-10.400l2.500 2.700-5.200 5.500" stroke="#fff" />
        <path d="M1164.500 744.500h12.500v8h-12.500z" stroke="#fff" strokeWidth="1.200" />
        <path d="M1166.500 746h4v5h-4zM1177.500 746.500h1.500v4h-1.500z" fill="#fff" />
        <g stroke="#e8edf0" strokeWidth="1.200">
          <path d="M1199 754.500a3.500 3.500 0 0 1 3.500-3.500M1196 754.500a6.500 6.500 0 0 1 6.500-6.500M1193.300 754.500a9.500 9.500 0 0 1 9-9.500" />
          <path d="M1190.500 754a12 12 0 0 1 11.500-11.500" stroke="#8794a0" />
          <path d="M1200.500 753.500h2v1.500h-2z" fill="#fff" stroke="none" />
        </g>
      </Cell>
      <Fit w={23} className="text-[12px] leading-[39px]">ENG</Fit>
      <div className="ml-[13px] flex w-[59px] flex-col items-center pt-[2px] text-[12px] leading-[18px]">
        <Fit w={27}>13:17</Fit>
        <Fit w={58}>13-10-2023</Fit>
      </div>
      <Cell x={1308} w={58} {...t}>
        <path d="M1325 740h16.500v12.500h-8.500l-4 4v-4h-4z" fill="#fff" />
        <path d="M1328 743.500h10.500M1328 746.500h10.500M1328 749.500h7" stroke="#1c2d3a" />
        <circle cx="1340.500" cy="755" r="7.500" fill="#2b3136" stroke="#8d979e" />
        <text x="1337.500" y="759" fontSize="11.500" fill="#fff">1</text>
        <path d="M1361.500 728v40" stroke="#5a6872" />
      </Cell>
    </div>
  );
}

export default function App() {
  return (
    <div className="h-[768px] w-[1366px] overflow-hidden bg-white">
      <div className={`flex h-[22px] items-center justify-between text-[12px] text-black ${SEGOE}`}>
        <div className="flex items-center pl-[3px] pt-[2px]">
          <svg width="20" height="16" viewBox="0 0 20 16" fill="none">
            <path d="M0 0h15v15H0z" fill="#f4f6f7" /><path d="M14.500 0v14.500H0" stroke="#b9b9b9" />
            <TableauMark cx={7} cy={7} s={0.800} sw={1.400} colors={["#2f6f9f", "#4a93bd"]} />
          </svg>
          <Fit w={187} className="leading-[20px]">Tableau - project workbook Sachika</Fit>
        </div>
        <svg width="126" height="22" viewBox="1240 0 126 22" fill="none" stroke="#000">
          <path d="M1245 10.500h10M1290.500 7.500h7v7h-7zM1292.500 7.500v-2h7v7h-2M1336 5.500l10 10M1346 5.500l-10 10" strokeWidth="1.100" />
        </svg>
      </div>
      <div className={`flex h-[21px] gap-[16px] pl-[8px] pt-[2px] text-[12px] text-black ${SEGOE}`}>
        {menus.map(([m, w]) => <Fit key={m} w={w} className="leading-[19px]">{m}</Fit>)}
      </div>
      <Toolbar />
      <div className="flex h-[593px]">
        <Sidebar />
        <Main />
      </div>
      <Tabs />
      <Status />
      <Taskbar />
    </div>
  );
}
